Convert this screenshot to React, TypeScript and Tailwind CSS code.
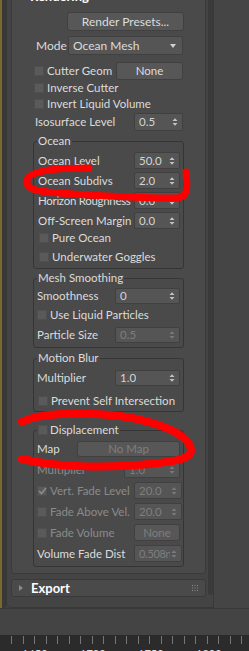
import type { ReactNode } from 'react'

const on = 'text-[#dcdcdc]'
const off = 'text-[#8a8a8a]'

function Arrows({ dim }: { dim?: boolean }) {
  return (
    <svg width="6" height="10" viewBox="0 0 6 10" className={`shrink-0 ${dim ? 'fill-[#7a7a7a]' : 'fill-[#c4c4c4]'}`}>
      <path d="M0.5 4 L3 1.2 L5.5 4 Z M0.5 6 L3 8.8 L5.5 6 Z" />
    </svg>
  )
}

function Check({ checked, dim }: { checked?: boolean; dim?: boolean }) {
  return (
    <span className="flex h-[10px] w-[10px] shrink-0 items-center justify-center bg-[#5a5a5a] shadow-[inset_0_0_0_1px_#4f4f4f]">
      {checked && (
        <svg width="9" height="8" viewBox="0 0 9 8">
          <path d="M1 4 L3.5 6.5 L8 1" fill="none" stroke={dim ? '#8c8c8c' : '#e0e0e0'} strokeWidth="1.6" />
        </svg>
      )}
    </span>
  )
}

function Spinner({ value, className, dim }: { value: string; className: string; dim?: boolean }) {
  return (
    <div className={`flex shrink-0 items-center justify-between gap-[1px] rounded-[2px] border border-[#404040] bg-[#555555] pl-[4px] pr-[4px] ${className}`}>
      <span className={`min-w-0 overflow-hidden ${dim ? 'text-[#7e7e7e]' : 'text-[#d4d4d4]'}`}>{value}</span>
      <Arrows dim={dim} />
    </div>
  )
}

function Btn({ children, className, dim }: { children: ReactNode; className: string; dim?: boolean }) {
  return (
    <div className={`flex shrink-0 items-center justify-center rounded-[3px] border border-[#404040] bg-[#575757] ${dim ? 'text-[#7e7e7e]' : on} ${className}`}>
      {children}
    </div>
  )
}

function CheckRow({ label, className, checked, dim }: { label: string; className: string; checked?: boolean; dim?: boolean }) {
  return (
    <div className={`flex items-center gap-[3px] ${className}`}>
      <Check checked={checked} dim={dim} />
      <span className={dim ? off : on}>{label}</span>
    </div>
  )
}

function Group({ title, className, children }: { title: ReactNode; className: string; children: ReactNode }) {
  return (
    <fieldset className={`-mx-[1px] rounded-[3px] border border-[#353535] px-[3px] ${className}`}>
      <legend className={`flex h-[16px] items-center px-[1px] ${on}`}>{title}</legend>
      <div className="flex flex-col">{children}</div>
    </fieldset>
  )
}

export default function App() {
  const ticks = Array.from({ length: 21 })
  return (
    <div className="relative flex h-[651px] w-[249px] flex-col overflow-hidden whitespace-nowrap bg-[#444444] font-['Lato','Liberation_Sans',sans-serif] text-[11.5px] leading-none">
      <div className="flex h-[608px] shrink-0">
        <div className="w-[2px] bg-[#7a692c]" />
        <div className="w-[4px] bg-[#393939]" />
        <div className="flex w-[208px] overflow-hidden rounded-bl-[5px] border-b border-l border-r border-[#383838] bg-[#444444] pl-[4px]">
          <div className="-mt-[14px] flex w-[195px] shrink-0 flex-col">
            {/* Rendering rollout */}
            <div className="flex flex-col rounded-[3px] border border-[#3a3a3a] bg-[#4a4a4a] pb-[6px]">
              <div className="flex h-[18px] items-center gap-[6px] pl-[6px]">
                <svg width="6" height="5" viewBox="0 0 6 5" className="fill-[#8a8a8a]">
                  <path d="M0 0 L6 0 L3 4 Z" />
                </svg>
                <span className="text-[13px] font-bold text-white">Rendering</span>
              </div>
              <div className="flex flex-col px-[22px]">
                <div className="-mr-[1px] mt-[7px] flex justify-end">
                  <Btn className="h-[19px] w-[117px] text-[12px]">Render Presets...</Btn>
                </div>
                <div className="mt-[5px] flex h-[19px] items-center justify-between pl-[2px]">
                  <span className={`text-[12px] ${on}`}>Mode</span>
                  <div className="flex h-[19px] w-[115px] items-center justify-between rounded-[2px] border border-[#404040] bg-[#555555] pl-[4px] pr-[6px]">
                    <span className={`text-[12px] ${on}`}>Ocean Mesh</span>
                    <svg width="6" height="4" viewBox="0 0 6 4" className="fill-[#d0d0d0]">
                      <path d="M0 0 L6 0 L3 4 Z" />
                    </svg>
                  </div>
                </div>
                <div className="mt-[7px] flex h-[18px] items-center justify-between">
                  <CheckRow label="Cutter Geom" className="h-[18px]" />
                  <Btn className="h-[18px] w-[67px]">None</Btn>
                </div>
                <CheckRow label="Inverse Cutter" className="h-[16px]" />
                <CheckRow label="Invert Liquid Volume" className="h-[16px]" />
                <div className="mt-[1px] flex h-[18px] items-center justify-between pl-[1px]">
                  <span className={on}>Isosurface Level</span>
                  <Spinner value="0.5" className="h-[18px] w-[49px]" />
                </div>

                <Group title="Ocean" className="mt-[2px] pb-[2px]">
                  <div className="mt-[3px] flex h-[17px] items-center justify-between pl-[1px]">
                    <span className={on}>Ocean Level</span>
                    <Spinner value="50.0" className="h-[17px] w-[46px]" />
                  </div>
                  <div className="mt-[3px] flex h-[17px] items-center justify-between pl-[1px]">
                    <span className={on}>Ocean Subdivs</span>
                    <Spinner value="2.0" className="h-[17px] w-[46px]" />
                  </div>
                  <div className="mt-[3px] flex h-[17px] items-center justify-between pl-[1px]">
                    <span className={`tracking-[-0.3px] ${on}`}>Horizon Roughness</span>
                    <Spinner value="0.0" className="h-[17px] w-[46px]" />
                  </div>
                  <div className="mt-[3px] flex h-[17px] items-center justify-between pl-[1px]">
                    <span className={on}>Off-Screen Margin</span>
                    <Spinner value="0.0" className="h-[17px] w-[46px]" />
                  </div>
                  <CheckRow label="Pure Ocean" className="h-[18px] pl-[2px]" />
                  <CheckRow label="Underwater Goggles" className="mt-[1px] h-[18px] pl-[2px]" />
                </Group>

                <Group title="Mesh Smoothing" className="mt-[1px] pb-[4px]">
                  <div className="mt-[2px] flex h-[16px] items-center justify-between">
                    <span className={on}>Smoothness</span>
                    <Spinner value="0" className="h-[16px] w-[65px]" />
                  </div>
                  <CheckRow label="Use Liquid Particles" className="mt-[1px] h-[20px]" />
                  <div className="mt-[2px] flex h-[16px] items-center justify-between">
                    <span className={on}>Particle Size</span>
                    <Spinner value="0.5" className="h-[16px] w-[65px]" dim />
                  </div>
                </Group>

                <Group title="Motion Blur" className="mt-[2px]">
                  <div className="mt-[4px] flex h-[16px] items-center justify-between">
                    <span className={on}>Multiplier</span>
                    <Spinner value="1.0" className="h-[16px] w-[65px]" />
                  </div>
                  <CheckRow label="Prevent Self Intersection" className="mt-[5px] h-[20px] pl-[1px]" />
                </Group>

                <Group
                  title={
                    <span className="flex items-center gap-[2px]">
                      <Check />
                      <span>Displacement</span>
                    </span>
                  }
                  className="mt-[10px] pb-[4px]"
                >
                  <div className="mt-[2px] flex h-[17px] items-center justify-between">
                    <span className={on}>Map</span>
                    <Btn className="h-[16px] w-[103px]" dim>No Map</Btn>
                  </div>
                  <div className="mt-[4px] flex h-[17px] items-center justify-between">
                    <span className={off}>Multiplier</span>
                    <Spinner value="1.0" className="h-[16px] w-[56px]" dim />
                  </div>
                  <div className="mt-[4px] flex h-[17px] items-center justify-between">
                    <CheckRow label="Vert. Fade Level" className="h-[17px]" checked dim />
                    <Spinner value="20.0" className="-mr-[2px] h-[17px] w-[48px]" dim />
                  </div>
                  <div className="mt-[4px] flex h-[17px] items-center justify-between">
                    <CheckRow label="Fade Above Vel." className="h-[17px]" dim />
                    <Spinner value="20.0" className="-mr-[2px] h-[17px] w-[48px]" dim />
                  </div>
                  <div className="mt-[4px] flex h-[17px] items-center justify-between">
                    <CheckRow label="Fade Volume" className="h-[17px]" dim />
                    <Btn className="h-[17px] w-[46px]" dim>None</Btn>
                  </div>
                  <div className="mt-[4px] flex h-[17px] items-center justify-between">
                    <span className={on}>Volume Fade Dist</span>
                    <Spinner value="0.508n" className="-mr-[2px] h-[17px] w-[48px] pl-[3px] text-[11px] tracking-[-0.3px]" dim />
                  </div>
                </Group>
              </div>
            </div>

            {/* Export rollout */}
            <div className="mt-[5px] flex h-[18px] items-center justify-between rounded-[3px] border border-[#3a3a3a] bg-[#4a4a4a] pl-[7px] pr-[7px]">
              <div className="flex items-center gap-[8px]">
                <svg width="4" height="6" viewBox="0 0 4 6" className="fill-[#8a8a8a]">
                  <path d="M0 0 L4 3 L0 6 Z" />
                </svg>
                <span className="text-[13px] font-bold text-white">Export</span>
              </div>
              <svg width="6" height="6" viewBox="0 0 6 6" className="fill-[#8c8c8c]">
                <rect x="0" y="0" width="1" height="1" />
                <rect x="2.5" y="0" width="1" height="1" />
                <rect x="5" y="0" width="1" height="1" />
                <rect x="0" y="2.5" width="1" height="1" />
                <rect x="2.5" y="2.5" width="1" height="1" />
                <rect x="5" y="2.5" width="1" height="1" />
                <rect x="0" y="5" width="1" height="1" />
                <rect x="2.5" y="5" width="1" height="1" />
                <rect x="5" y="5" width="1" height="1" />
              </svg>
            </div>
          </div>

          {/* scrollbar */}
          <div className="flex w-[7px] shrink-0 justify-end">
            <div className="h-[595px] w-[5px] rounded-b-[3px] bg-[#3a3a3a]" />
          </div>
        </div>
        <div className="w-[35px] bg-[#454545]" />
      </div>

      <div className="h-[27px] shrink-0 border-t border-[#383838] bg-[#444444]" />

      {/* timeline ruler */}
      <div className="flex h-[16px] shrink-0 flex-col bg-[#2b2b2b]">
        <div className="flex h-[9px] pl-[11px] pt-[1px]">
          {ticks.map((_, i) => (
            <div key={i} className="h-[8px] w-[11.5px] shrink-0 border-l border-[#777777]" />
          ))}
        </div>
        <div className="flex pl-[22px] pt-[4px] text-[11px] text-[#dddddd]">
          <span className="w-[58px] shrink-0">1650</span>
          <span className="w-[58px] shrink-0">1700</span>
          <span className="w-[58px] shrink-0">1750</span>
          <span className="w-[58px] shrink-0">1800</span>
        </div>
      </div>

      {/* red hand-drawn annotations */}
      <svg className="pointer-events-none absolute left-0 top-0" width="249" height="651" viewBox="0 0 249 651">
        <path
          d="M89 168 C60 168, 30 170, 27 180 C25 190, 40 192, 60 193 C100 196, 150 198, 175 198 C190 198, 187 185, 186 172"
          fill="none"
          stroke="#ff0000"
          strokeWidth="7"
          strokeLinecap="round"
        />
        <path
          d="M22 422 C40 412, 90 412, 120 416 C160 422, 190 435, 191 450 C191 460, 170 462, 150 464 C110 468, 60 468, 22 459"
          fill="none"
          stroke="#ff0000"
          strokeWidth="8"
          strokeLinecap="round"
        />
      </svg>
    </div>
  )
}
